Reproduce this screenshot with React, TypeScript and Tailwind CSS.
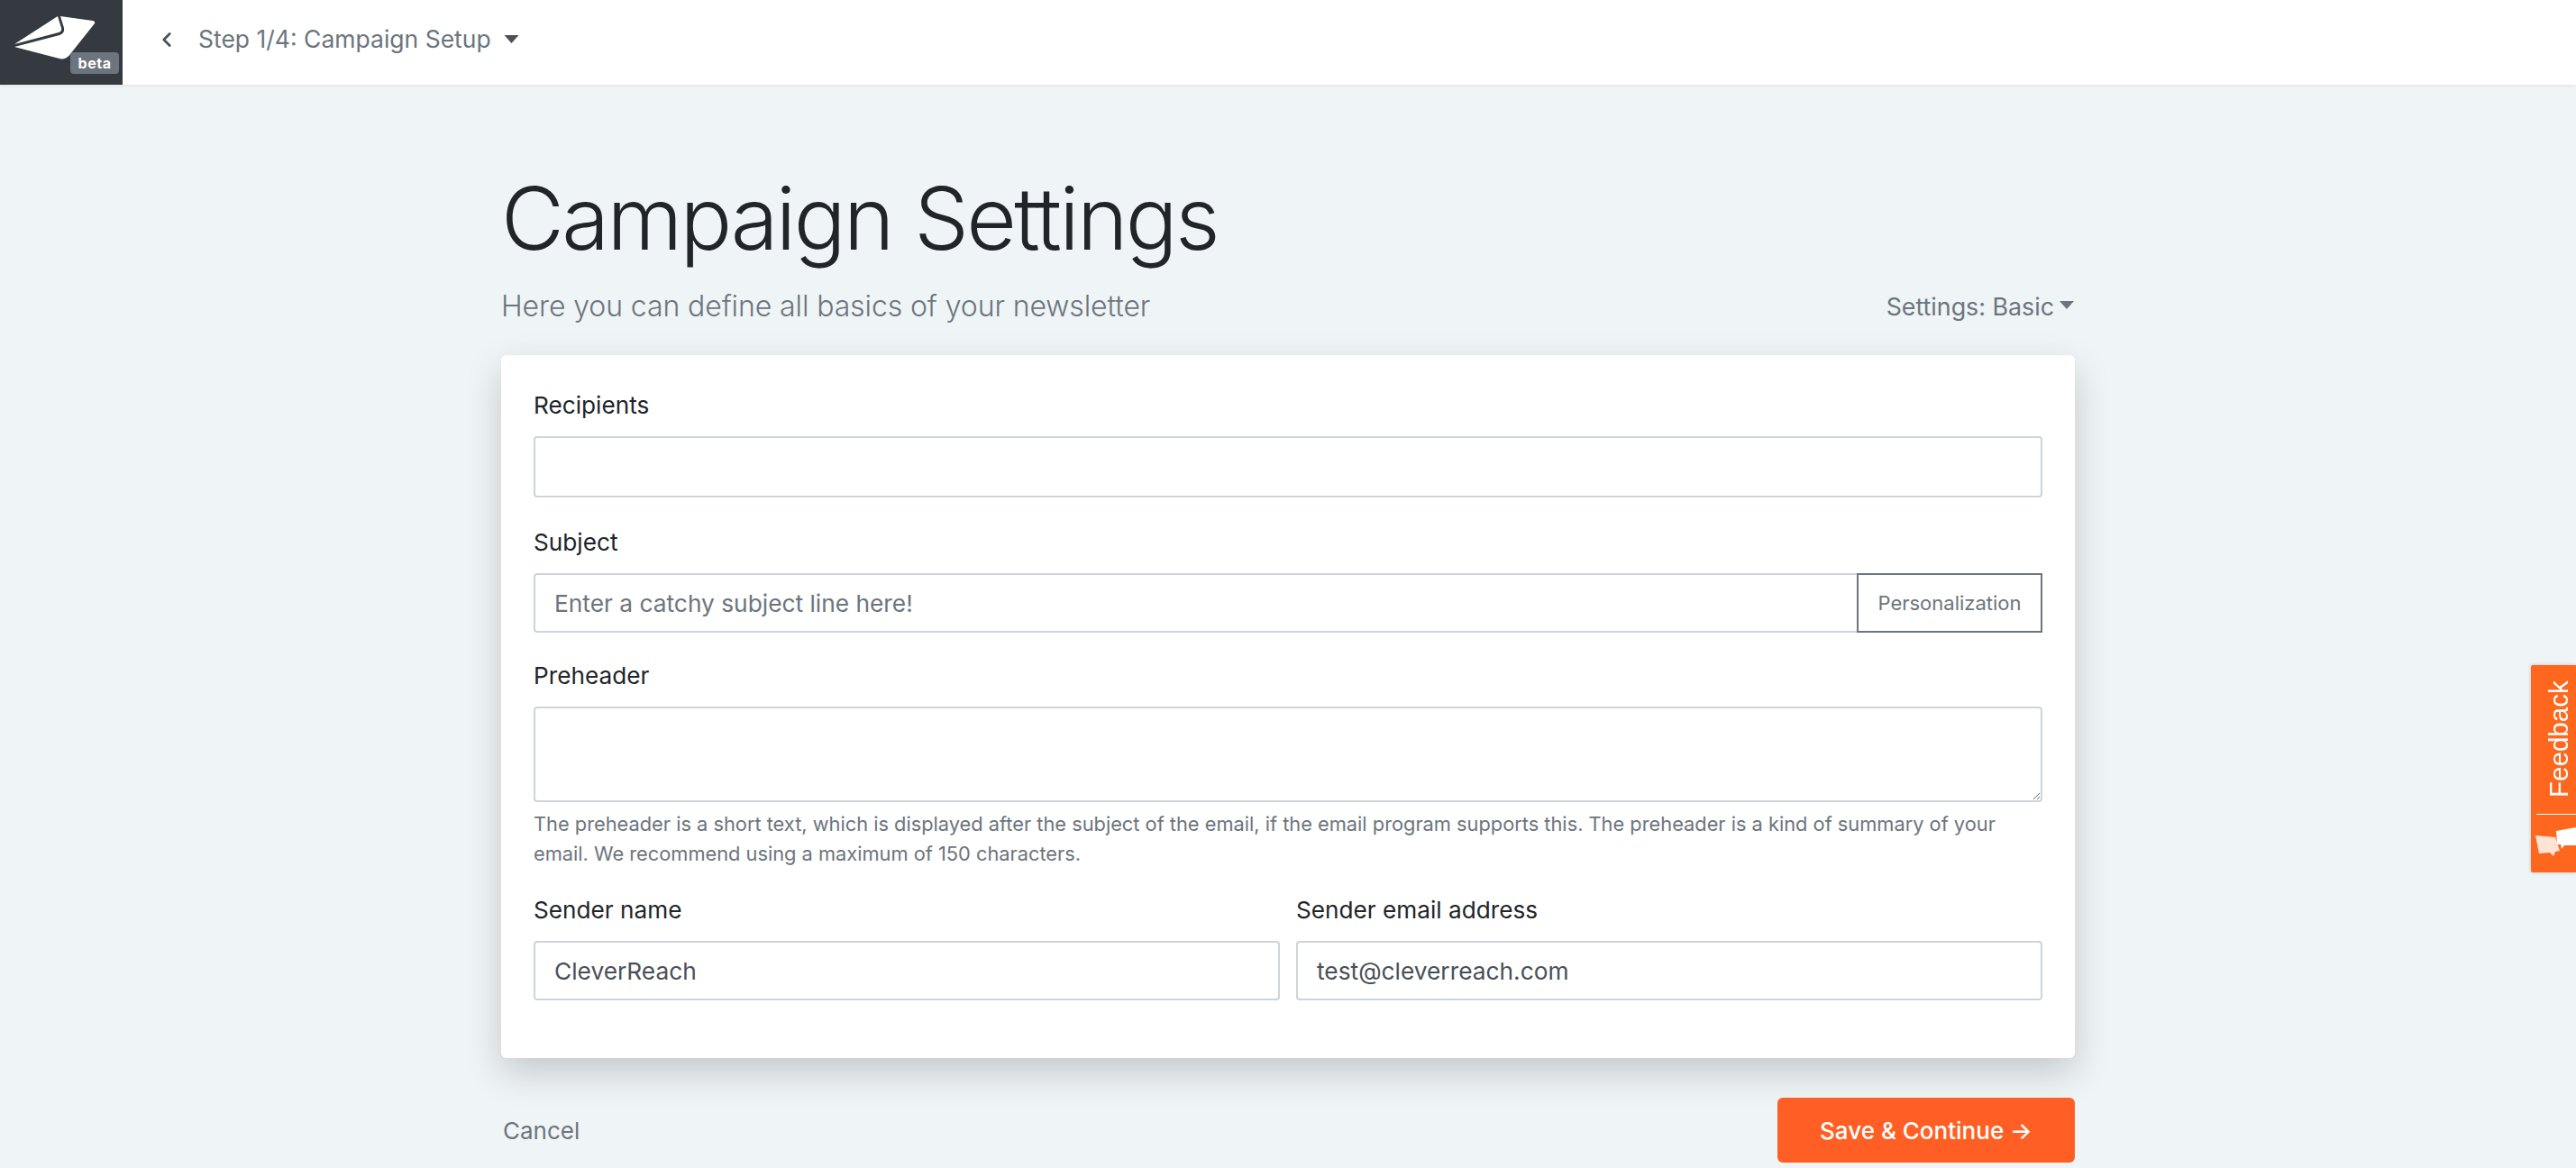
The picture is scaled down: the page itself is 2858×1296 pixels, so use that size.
import { ChevronLeft } from 'lucide-react';

function Caret({ className }: { className: string }) {
  return (
    <svg viewBox="0 0 16 9" className={className} fill="currentColor">
      <path d="M0 0h16L8 9z" />
    </svg>
  );
}

function Logo() {
  return (
    <div className="relative h-[94px] w-[136px] shrink-0 bg-[#343a40]">
      <svg viewBox="0 0 136 94" className="absolute left-0 top-0 h-[94px] w-[136px]">
        <path d="M64 18 L16 49 L65 36 Q69 35 68 31 Z" fill="#fff" />
        <path d="M67 18 L103 23 Q106 24 105 26 L78 60 Q73 67 66 65 L16 52 L66 39 Q72 37 71 31 Z" fill="#fff" />
      </svg>
      <span className="absolute left-[78px] top-[58px] flex h-[24px] w-[54px] items-center justify-center rounded-[4px] bg-[#6c757d] text-[16px] font-bold tracking-[0.5px] text-white">
        beta
      </span>
    </div>
  );
}

function FeedbackTab() {
  return (
    <div className="fixed right-0 top-[738px] flex h-[230px] w-[50px] flex-col overflow-hidden rounded-l-[2px] bg-[#ff671f] shadow-[0_0_4px_rgba(0,0,0,0.2)]">
      <div className="flex h-[165px] w-full items-center justify-center pb-[1px] pl-[12px]">
        <span className="-rotate-90 whitespace-nowrap font-['Liberation_Sans',sans-serif] text-[29.5px] text-white">
          Feedback
        </span>
      </div>
      <div className="ml-[6px] h-[1px] w-full bg-white" />
      <svg viewBox="0 0 50 64" className="h-[64px] w-[50px] shrink-0">
        <path d="M5 23 L27 25 L32 40 L27 41 L25 46 L21 42 L9 43 Z" fill="#ffe3d3" />
        <path d="M28 18 L50 14 L50 34 L37 34 L34 38 L33 33 L29 33 Z" fill="#fff" />
      </svg>
    </div>
  );
}

function FieldLabel({ children }: { children: string }) {
  return <label className="mb-[15px] block text-[26.2px] leading-[39px] text-[#212529]">{children}</label>;
}

const inputClass =
  "block h-[66px] w-full rounded-[4px] border-2 border-[#ced4da] bg-white px-[21px] text-[26.3px] text-[#495057] outline-none placeholder:text-[#6c757d]";

export default function App() {
  return (
    <div className="h-[1296px] overflow-hidden bg-[#eff4f7] font-['Inter',sans-serif]">
      <header className="flex h-[94px] bg-white shadow-[0_1px_4px_rgba(0,0,0,0.08)]">
        <Logo />
        <div className="flex items-center pb-[7px]">
          <ChevronLeft className="ml-[36px] h-[26px] w-[26px] text-[#495057]" strokeWidth={2.5} />
          <span className="ml-[22px] text-[26.5px] text-[#6c757d]">Step 1/4: Campaign Setup</span>
          <Caret className="ml-[14px] h-[9px] w-[17px] text-[#495057]" />
        </div>
      </header>

      <main className="mx-auto w-[1746px] pt-[90px]">
        <h1 className="text-[96px] font-light leading-[116px] tracking-[-2.6px] text-[#212529]">Campaign Settings</h1>
        <div className="mt-[16px] flex items-center justify-between">
          <p className="text-[32px] font-light leading-[48px] tracking-[-0.1px] text-[#6c757d]">Here you can define all basics of your newsletter</p>
          <button className="flex items-center text-[26.8px] text-[#6c757d]">
            Settings: Basic
            <Caret className="-mt-[4px] ml-[5px] h-[9px] w-[18px]" />
          </button>
        </div>

        <section className="mt-[30px] rounded-[6px] bg-white px-[36px] pb-[64px] pt-[36px] shadow-[0_16px_40px_rgba(0,0,0,0.18)]">
          <FieldLabel>Recipients</FieldLabel>
          <input className={`${inputClass} !h-[68px]`} />

          <div className="mt-[30px]">
            <FieldLabel>Subject</FieldLabel>
            <div className="flex">
              <input className={`${inputClass} rounded-r-none border-r-0`} placeholder="Enter a catchy subject line here!" />
              <button className="h-[66px] w-[206px] shrink-0 border-2 border-[#6c757d] text-[22px] text-[#6c757d]">
                Personalization
              </button>
            </div>
          </div>

          <div className="mt-[28px]">
            <FieldLabel>Preheader</FieldLabel>
            <textarea className="block h-[106px] w-full rounded-[4px] border-2 border-[#ced4da] bg-white px-[21px] py-[12px] text-[26px] outline-none" />
            <p className="mt-[8px] text-[21.8px] leading-[33px] text-[#6c757d]">
              The preheader is a short text, which is displayed after the subject of the email, if the email program supports this. The preheader is a kind of summary of your email. We recommend using a maximum of 150 characters.
            </p>
          </div>

          <div className="mt-[26px] grid grid-cols-2 gap-[18px]">
            <div>
              <FieldLabel>Sender name</FieldLabel>
              <input className={inputClass} defaultValue="CleverReach" />
            </div>
            <div>
              <FieldLabel>Sender email address</FieldLabel>
              <input className={inputClass} defaultValue="test@cleverreach.com" />
            </div>
          </div>
        </section>

        <div className="mt-[44px] flex items-center justify-between">
          <a className="ml-[2px] text-[26px] text-[#6c757d]">Cancel</a>
          <button className="h-[72px] w-[330px] rounded-[6px] bg-[#ff5f24] text-[26px] font-medium text-white">
            Save &amp; Continue →
          </button>
        </div>
      </main>

      <FeedbackTab />
    </div>
  );
}
